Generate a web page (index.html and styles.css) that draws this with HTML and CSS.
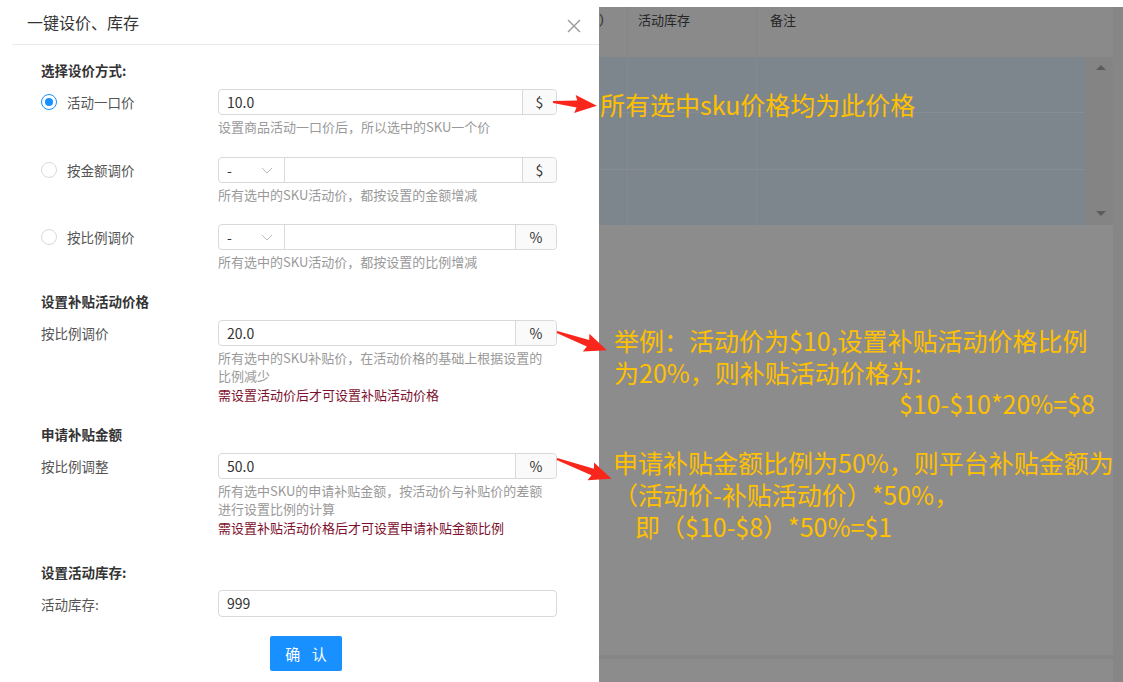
FILE: index.html
```html
<!DOCTYPE html>
<html lang="zh-CN">
<head>
<meta charset="utf-8">
<title>一键设价、库存</title>
<link rel="stylesheet" href="styles.css">
</head>
<body>
<div class="page">
  <div class="modal">
    <div class="modal-header">
      <span class="modal-title">一键设价、库存</span>
      <svg class="close" width="14" height="14" viewBox="0 0 14 14"><path d="M1 1 L13 13 M13 1 L1 13" stroke="#999" stroke-width="1.4" fill="none"/></svg>
    </div>
    <div class="modal-body">
      <div class="section-title">选择设价方式:</div>
      <div class="row">
        <div class="label"><span class="radio checked"></span>活动一口价</div>
        <div class="ctrl">
          <div class="input-group"><div class="input">10.0</div><div class="addon">$</div></div>
          <div class="help">设置商品活动一口价后，所以选中的SKU一个价</div>
        </div>
      </div>
      <div class="row row-gap21">
        <div class="label"><span class="radio"></span>按金额调价</div>
        <div class="ctrl">
          <div class="input-group"><div class="select">-<svg class="chev" width="12" height="7" viewBox="0 0 12 7"><path d="M1 1 L6 6 L11 1" stroke="#bbb" stroke-width="1" fill="none"/></svg></div><div class="input"></div><div class="addon">$</div></div>
          <div class="help">所有选中的SKU活动价，都按设置的金额增减</div>
        </div>
      </div>
      <div class="row row-gap20">
        <div class="label"><span class="radio"></span>按比例调价</div>
        <div class="ctrl">
          <div class="input-group"><div class="select">-<svg class="chev" width="12" height="7" viewBox="0 0 12 7"><path d="M1 1 L6 6 L11 1" stroke="#bbb" stroke-width="1" fill="none"/></svg></div><div class="input"></div><div class="addon pct">%</div></div>
          <div class="help">所有选中的SKU活动价，都按设置的比例增减</div>
        </div>
      </div>

      <div class="section-title gap20">设置补贴活动价格</div>
      <div class="row">
        <div class="label">按比例调价</div>
        <div class="ctrl">
          <div class="input-group"><div class="input">20.0</div><div class="addon pct">%</div></div>
          <div class="help">所有选中的SKU补贴价，在活动价格的基础上根据设置的比例减少</div>
          <div class="warn">需设置活动价后才可设置补贴活动价格</div>
        </div>
      </div>

      <div class="section-title gap20">申请补贴金额</div>
      <div class="row">
        <div class="label">按比例调整</div>
        <div class="ctrl">
          <div class="input-group"><div class="input">50.0</div><div class="addon pct">%</div></div>
          <div class="help">所有选中SKU的申请补贴金额，按活动价与补贴价的差额进行设置比例的计算</div>
          <div class="warn">需设置补贴活动价格后才可设置申请补贴金额比例</div>
        </div>
      </div>

      <div class="section-title gap25">设置活动库存:</div>
      <div class="row row-gap8">
        <div class="label tall">活动库存:</div>
        <div class="ctrl">
          <div class="input-group tall"><div class="input">999</div></div>
        </div>
      </div>

      <button class="btn">确 认</button>
    </div>
  </div>

  <div class="backdrop">
    <div class="bd-main">
      <div class="thead">
        <div class="th th1">）</div>
        <div class="th th2">活动库存</div>
        <div class="th th3">备注</div>
      </div>
      <div class="tbody-wrap">
        <div class="tbody">
          <div class="tr"><div class="td td1"></div><div class="td td2"></div><div class="td td3"></div></div>
          <div class="tr"><div class="td td1"></div><div class="td td2"></div><div class="td td3"></div></div>
          <div class="tr last"><div class="td td1"></div><div class="td td2"></div><div class="td td3"></div></div>
        </div>
        <div class="scrollbar">
          <span class="tri up"></span>
          <span class="tri down"></span>
        </div>
      </div>
      <div class="bd-fill"></div>
      <div class="bd-stripe"></div>
      <div class="bd-bottom"></div>
    </div>
    <div class="bd-strip"></div>
  </div>

  <svg class="arrows" width="1123" height="682" viewBox="0 0 1123 682">
    <polygon fill="#f8261b" points="0,-1 24,-3.5 22,-9 44,0 22,9 24,3.5 0,1" transform="translate(553,102) rotate(5)"/>
    <polygon fill="#f8261b" points="0,-1 33,-3.5 31,-9.5 53,0 31,9.5 33,3.5 0,1" transform="translate(557,332) rotate(20)"/>
    <polygon fill="#f8261b" points="0,-1 38,-3.5 36,-9.5 58,0 36,9.5 38,3.5 0,1" transform="translate(557,459) rotate(20)"/>
  </svg>

  <div class="note note1">所有选中sku价格均为此价格</div>
  <div class="note note2">
    <div>举例：活动价为$10,设置补贴活动价格比例</div>
    <div>为20%，则补贴活动价格为:</div>
    <div class="right">$10-$10*20%=$8</div>
  </div>
  <div class="note note3">
    <div>申请补贴金额比例为50%，则平台补贴金额为</div>
    <div>（活动价-补贴活动价）*50%，</div>
    <div class="indent">即（$10-$8）*50%=$1</div>
  </div>
</div>
</body>
</html>
```

FILE: styles.css
```css
* { box-sizing: border-box; }
body {
  margin: 0;
  font-family: "Noto Sans CJK SC", "Noto Sans", sans-serif;
  background: #fff;
}
.page {
  position: relative;
  display: flex;
  width: 1123px;
  height: 682px;
  overflow: hidden;
  background: #fff;
}

/* modal */
.modal {
  width: 599px;
  flex: none;
  background: #fff;
}
.modal-header {
  height: 45px;
  margin-left: 12px;
  padding: 0 18px 0 15px;
  border-bottom: 1px solid #e9e9e9;
  display: flex;
  align-items: center;
  justify-content: space-between;
}
.modal-title {
  font-size: 16px;
  color: #333;
  line-height: 20px;
  margin-top: -1px;
}
.close { margin-top: 7px; }
.modal-body {
  padding: 15px 0 0 41px;
}
.section-title {
  font-size: 13.5px;
  font-weight: bold;
  line-height: 20px;
  color: #333;
}
.gap20 { margin-top: 20px; }
.gap25 { margin-top: 25px; }
.row {
  display: grid;
  grid-template-columns: 177px 339px;
  margin-top: 9px;
}
.row-gap21 { margin-top: 21px; }
.row-gap20 { margin-top: 20px; }
.row-gap8 { margin-top: 8px; }
.label {
  height: 26px;
  display: flex;
  align-items: center;
  font-size: 13.5px;
  color: #555;
}
.label.tall { height: 27px; }
.radio {
  width: 16px;
  height: 16px;
  border: 1px solid #d9d9d9;
  border-radius: 50%;
  margin-right: 10px;
  display: flex;
  align-items: center;
  justify-content: center;
  background: #fff;
}
.radio.checked { border-color: #1890ff; }
.radio.checked::after {
  content: "";
  width: 8px;
  height: 8px;
  border-radius: 50%;
  background: #1890ff;
}
.input-group {
  height: 26px;
  border: 1px solid #d9d9d9;
  border-radius: 4px;
  display: flex;
  background: #fff;
}
.input-group.tall { height: 27px; }
.input {
  flex: 1;
  padding-left: 8px;
  font-size: 14px;
  line-height: 24px;
  color: #333;
}
.select {
  width: 66px;
  border-right: 1px solid #d9d9d9;
  padding: 0 11px 0 8px;
  font-size: 14px;
  line-height: 24px;
  color: #333;
  display: flex;
  align-items: center;
  justify-content: space-between;
}
.addon {
  width: 34px;
  border-left: 1px solid #d9d9d9;
  background: #fafafa;
  border-radius: 0 4px 4px 0;
  text-align: center;
  font-size: 14px;
  line-height: 24px;
  color: #333;
}
.addon.pct { width: 41px; }
.help {
  width: 328px;
  font-size: 13px;
  line-height: 18px;
  color: #999;
  margin-top: 3px;
}
.warn {
  font-size: 13px;
  line-height: 18px;
  color: #7d0f2e;
  margin-top: 1px;
}
.btn {
  display: block;
  margin: 19px 0 0 229px;
  width: 72px;
  height: 35px;
  border: 0;
  border-radius: 2px;
  background: #1890ff;
  color: #fff;
  font-family: "Noto Sans CJK SC", sans-serif;
  font-size: 15px;
  letter-spacing: 4px;
  text-indent: 4px;
  padding: 0;
}

/* backdrop */
.backdrop {
  flex: 1;
  margin-top: 7px;
  display: flex;
  background: #8c8c8c;
  box-shadow: inset 5px 0 4px -3px rgba(0,0,0,0.06);
}
.bd-main {
  flex: 1;
  display: flex;
  flex-direction: column;
}
.bd-strip {
  width: 10px;
  background: #868686;
}
.thead {
  height: 50px;
  display: flex;
  background: #8a8a8a;
}
.th {
  font-size: 13px;
  color: #262626;
  line-height: 18px;
  padding-top: 4px;
  border-right: 1px solid #858585;
}
.th1 { width: 29px; overflow: hidden; padding-left: 0; }
.th2 { width: 129px; padding-left: 10px; }
.th3 { flex: 1; padding-left: 13px; border-right: 0; }
.tbody-wrap {
  height: 168px;
  display: flex;
}
.tbody {
  width: 486px;
  background: #7e868d;
  display: flex;
  flex-direction: column;
}
.tr {
  flex: 1;
  display: flex;
  border-bottom: 1px solid #858c93;
}
.tr.last { border-bottom: 0; }
.td { border-right: 1px solid #838a91; }
.td1 { width: 29px; }
.td2 { width: 129px; }
.td3 { flex: 1; border-right: 0; }
.scrollbar {
  flex: 1;
  background: #848484;
  display: flex;
  flex-direction: column;
  align-items: center;
  justify-content: space-between;
  padding: 8px 0 9px 3px;
}
.tri {
  width: 0;
  height: 0;
  border-left: 5px solid transparent;
  border-right: 5px solid transparent;
}
.tri.up { border-bottom: 5px solid #5c5c5c; }
.tri.down { border-top: 5px solid #5c5c5c; }
.bd-fill { flex: 1; background: #8c8c8c; }
.bd-stripe { height: 4px; background: #868686; }
.bd-bottom { height: 23px; background: #8c8c8c; }

/* annotations overlay */
.arrows {
  position: absolute;
  left: 0;
  top: 0;
  pointer-events: none;
}
.note {
  position: absolute;
  color: #ffc000;
  font-family: "Noto Sans CJK SC", sans-serif;
  white-space: nowrap;
}
.note1 {
  left: 600px;
  top: 89px;
  font-size: 25px;
  line-height: 30px;
}
.note2 {
  left: 614px;
  top: 325px;
  width: 481px;
  font-size: 25px;
  line-height: 31.5px;
}
.note2 .right { text-align: right; }
.note3 {
  left: 613px;
  top: 446px;
  font-size: 25px;
  line-height: 32px;
}
.note3 .indent { margin-left: 22px; }
```
